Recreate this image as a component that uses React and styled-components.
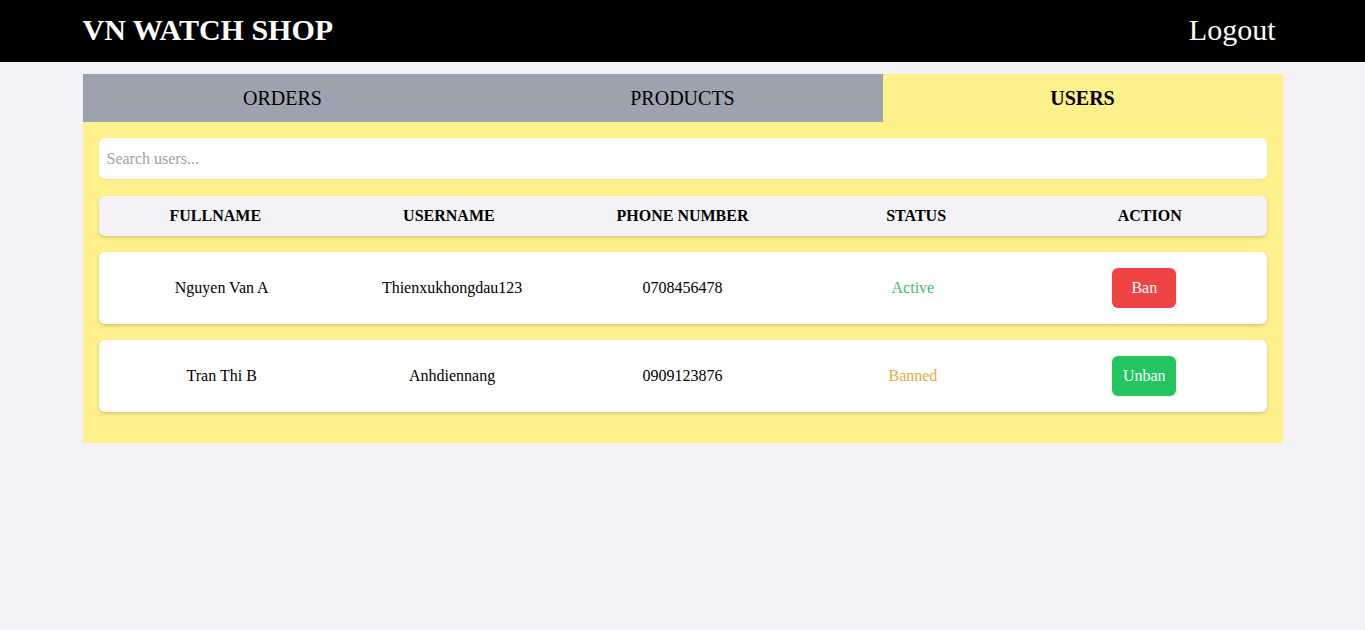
import React from "react";
import styled, { createGlobalStyle } from "styled-components";

const GlobalStyle = createGlobalStyle`
  * {
    box-sizing: border-box;
  }

  body {
    margin: 0;
    background: #f3f3f7;
    font-family: "Liberation Serif", "Times New Roman", serif;
    color: #000;
  }
`;

const StyledHeader = styled.header`
  background: #000;
  height: 62px;
`;

const StyledContainer = styled.div`
  width: 1200px;
  margin: 0 auto;
`;

const StyledHeaderInner = styled(StyledContainer)`
  display: flex;
  align-items: center;
  justify-content: space-between;
  height: 100%;
  padding-right: 7px;
  padding-bottom: 2px;
`;

const StyledLogo = styled.h1`
  margin: 0;
  font-size: 30px;
  font-weight: bold;
  color: #fff;
`;

const StyledLogout = styled.button`
  background: none;
  border: none;
  padding: 0;
  font-family: inherit;
  font-size: 30px;
  color: #fff;
  cursor: pointer;
`;

const StyledMain = styled(StyledContainer)`
  margin-top: 12px;
`;

const StyledTabs = styled.div`
  display: grid;
  grid-template-columns: repeat(3, 1fr);
`;

const StyledTab = styled.button`
  height: 48px;
  border: none;
  font-family: inherit;
  font-size: 20px;
  color: #000;
  cursor: pointer;
  font-weight: ${(props) => (props.active ? "bold" : "normal")};
  background: ${(props) => (props.active ? "#fef08a" : "#9ca3af")};
`;

const StyledPanel = styled.div`
  background: #fef08a;
  padding: 16px 16px 15px;
`;

const StyledSearch = styled.input`
  display: block;
  width: 100%;
  height: 41px;
  padding: 0 8px;
  border: none;
  border-radius: 6px;
  background: #fff;
  font-family: inherit;
  font-size: 16px;
  box-shadow: 0 1px 2px rgba(0, 0, 0, 0.06);
  outline: none;
  margin-bottom: 17px;

  &::placeholder {
    color: #9ca3af;
  }
`;

const StyledRow = styled.div`
  display: grid;
  grid-template-columns: repeat(5, 1fr);
  align-items: center;
  text-align: center;
  border-radius: 6px;
  margin-bottom: 16px;
  box-shadow: 0 2px 4px rgba(0, 0, 0, 0.12), 0 1px 2px rgba(0, 0, 0, 0.06);
  height: ${(props) => (props.head ? "40px" : "72px")};
  padding: ${(props) => (props.head ? "0" : "0 8px")};
  background: ${(props) => (props.head ? "#f3f3f7" : "#fff")};
  font-size: 16px;
  font-weight: ${(props) => (props.head ? "bold" : "normal")};
`;

const StyledStatus = styled.span`
  color: ${(props) => (props.banned ? "#e6aa3c" : "#3fbf68")};
`;

const StyledAction = styled.button`
  justify-self: center;
  height: 40px;
  width: 64px;
  margin-left: 2px;
  padding: 0;
  border: none;
  border-radius: 6px;
  font-family: inherit;
  font-size: 16px;
  color: #fff;
  cursor: pointer;
  background: ${(props) => (props.banned ? "#22c55e" : "#ef4444")};
`;

const users = [
  {
    fullname: "Nguyen Van A",
    username: "Thienxukhongdau123",
    phone: "0708456478",
    banned: false,
  },
  {
    fullname: "Tran Thi B",
    username: "Anhdiennang",
    phone: "0909123876",
    banned: true,
  },
];

const App = () => {
  return (
    <>
      <GlobalStyle />
      <StyledHeader>
        <StyledHeaderInner>
          <StyledLogo>VN WATCH SHOP</StyledLogo>
          <StyledLogout>Logout</StyledLogout>
        </StyledHeaderInner>
      </StyledHeader>

      <StyledMain>
        <StyledTabs>
          <StyledTab>ORDERS</StyledTab>
          <StyledTab>PRODUCTS</StyledTab>
          <StyledTab active>USERS</StyledTab>
        </StyledTabs>

        <StyledPanel>
          <StyledSearch placeholder="Search users..." />

          <StyledRow head>
            <span>FULLNAME</span>
            <span>USERNAME</span>
            <span>PHONE NUMBER</span>
            <span>STATUS</span>
            <span>ACTION</span>
          </StyledRow>

          {users.map((user) => (
            <StyledRow key={user.username}>
              <span>{user.fullname}</span>
              <span>{user.username}</span>
              <span>{user.phone}</span>
              <StyledStatus banned={user.banned}>
                {user.banned ? "Banned" : "Active"}
              </StyledStatus>
              <StyledAction banned={user.banned}>
                {user.banned ? "Unban" : "Ban"}
              </StyledAction>
            </StyledRow>
          ))}
        </StyledPanel>
      </StyledMain>
    </>
  );
};

export default App;
